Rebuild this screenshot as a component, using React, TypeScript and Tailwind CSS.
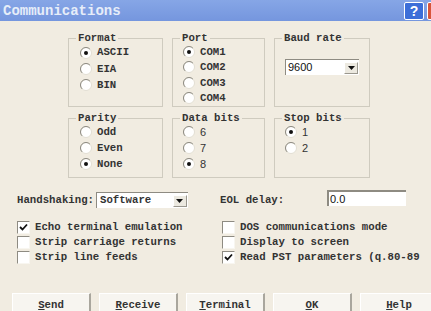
import React from "react";

const mono = { fontFamily: '"Liberation Mono", "DejaVu Sans Mono", monospace' };
const sans = { fontFamily: '"Liberation Sans", Arial, sans-serif' };

function Radio({ checked }: { checked?: boolean }) {
  return (
    <svg width="12" height="12" viewBox="0 0 12 12" className="shrink-0">
      <circle cx="6" cy="6" r="5.5" fill="#ffffff" stroke="#e2ded3" strokeWidth="1" />
      <path d="M2.1 9.9 A5.5 5.5 0 0 1 9.9 2.1" fill="none" stroke="#8d8a81" strokeWidth="1" />
      {checked && <circle cx="6" cy="6" r="2" fill="#111" />}
    </svg>
  );
}

function Check({ checked }: { checked?: boolean }) {
  return (
    <span className="w-[13px] h-[13px] shrink-0 bg-white border-t border-l border-t-[#8e8b82] border-l-[#8e8b82] border-r border-b border-r-[#f8f6f0] border-b-[#f8f6f0] flex items-center justify-center">
      {checked && (
        <svg width="9" height="9" viewBox="0 0 9 9">
          <path d="M1 4 L3.5 6.5 L8 1.5" fill="none" stroke="#111" strokeWidth="1.8" />
        </svg>
      )}
    </span>
  );
}

function Arrow() {
  return (
    <span className="w-[14px] h-[12px] bg-[#ece9e0] border-r border-b border-r-[#9a978e] border-b-[#9a978e] border-l border-t border-l-white border-t-white flex items-center justify-center">
      <svg width="7" height="4" viewBox="0 0 7 4">
        <path d="M0 0 H7 L3.5 4 Z" fill="#111" />
      </svg>
    </span>
  );
}

function Group({ title, children, className }: { title: string; children?: React.ReactNode; className?: string }) {
  return (
    <div className={"relative border border-[#cfcbbf] " + (className || "")}>
      <span
        className="absolute left-[7px] top-[-8px] px-[2px] bg-[#f1ece1] text-[10.7px] leading-[14px] font-bold text-[#333]"
        style={mono}
      >
        {title}
      </span>
      {children}
    </div>
  );
}

function RadioRow({ label, checked, h = "h-[16px]", sansText }: { label: string; checked?: boolean; h?: string; sansText?: boolean }) {
  return (
    <div className={"flex items-center gap-[5px] " + h}>
      <Radio checked={checked} />
      <span
        className={"text-[#333] " + (sansText ? "text-[11px]" : "text-[10.7px] font-bold")}
        style={sansText ? sans : mono}
      >
        {label}
      </span>
    </div>
  );
}

function CheckRow({ label, checked }: { label: string; checked?: boolean }) {
  return (
    <div className="flex items-center gap-[5px] h-[15px]">
      <Check checked={checked} />
      <span className="text-[10.7px] font-bold text-[#333] whitespace-nowrap" style={mono}>
        {label}
      </span>
    </div>
  );
}

function Btn({ label }: { label: string }) {
  return (
    <div className="w-[79px] h-[22px] shrink-0 bg-[#f7f5f0] border-t border-l border-t-white border-l-white border-r-2 border-r-[#a9a69d] flex items-center justify-center">
      <span className="text-[10.7px] font-bold text-[#333] mt-[2px]" style={mono}>
        <span className="underline">{label[0]}</span>
        {label.slice(1)}
      </span>
    </div>
  );
}

export default function App() {
  return (
    <div className="w-[431px] h-[311px] overflow-hidden bg-[#f1ece1] flex flex-col">
      {/* Title bar */}
      <div className="h-[21px] shrink-0 bg-gradient-to-b from-[#86a6e6] to-[#7596de] flex items-center">
        <span className="ml-[3px] text-[14px] font-bold text-[#e6edf9] leading-none" style={mono}>
          Communications
        </span>
        <div className="ml-auto flex items-center gap-[3px] mr-[-6px]">
          <span
            className="w-[20px] h-[18px] rounded-[2px] border border-white bg-[#3c6ed8] flex items-center justify-center text-white text-[14px] font-bold leading-none"
            style={sans}
          >
            ?
          </span>
          <span className="w-[10px] h-[18px] rounded-l-[2px] border border-white bg-[#d8553a]" />
        </div>
      </div>

      {/* Group boxes */}
      <div className="ml-[68px] mt-[17px] grid grid-cols-[95px_93px_96px] grid-rows-[69px_60px] gap-x-[9px] gap-y-[11px]">
        <Group title="Format">
          <div className="pt-[5px] pl-[11px] flex flex-col">
            <RadioRow label="ASCII" checked h="h-[17px]" />
            <RadioRow label="EIA" h="h-[16px]" />
            <RadioRow label="BIN" h="h-[16px]" />
          </div>
        </Group>
        <Group title="Port">
          <div className="pt-[5px] pl-[10px] flex flex-col">
            <RadioRow label="COM1" checked h="h-[15.5px]" />
            <RadioRow label="COM2" h="h-[15.5px]" />
            <RadioRow label="COM3" h="h-[15.5px]" />
            <RadioRow label="COM4" h="h-[15.5px]" />
          </div>
        </Group>
        <Group title="Baud rate">
          <div className="pt-[20px] pl-[10px]">
            <div className="w-[74px] h-[16px] bg-white border-t border-l border-t-[#8e8b82] border-l-[#8e8b82] flex items-center justify-between pl-[2px] pr-[1px]">
              <span className="text-[11px] text-[#111]" style={sans}>9600</span>
              <Arrow />
            </div>
          </div>
        </Group>
        <Group title="Parity">
          <div className="pt-[5px] pl-[11px] flex flex-col">
            <RadioRow label="Odd" />
            <RadioRow label="Even" />
            <RadioRow label="None" checked />
          </div>
        </Group>
        <Group title="Data bits">
          <div className="pt-[5px] pl-[10px] flex flex-col">
            <RadioRow label="6" sansText />
            <RadioRow label="7" sansText />
            <RadioRow label="8" checked sansText />
          </div>
        </Group>
        <Group title="Stop bits">
          <div className="pt-[5px] pl-[10px] flex flex-col">
            <RadioRow label="1" checked sansText />
            <RadioRow label="2" sansText />
          </div>
        </Group>
      </div>

      {/* Handshaking / EOL */}
      <div className="mt-[14px] pl-[17px] flex items-center h-[16px]">
        <div className="w-[203px] flex items-center">
          <span className="text-[10.7px] font-bold text-[#333] whitespace-nowrap" style={mono}>
            Handshaking:
          </span>
          <div className="ml-[2px] w-[92px] h-[16px] bg-white border-t border-l border-t-[#8e8b82] border-l-[#8e8b82] flex items-center justify-between pl-[3px] pr-[1px]">
            <span className="text-[10.7px] font-bold text-[#333]" style={mono}>Software</span>
            <Arrow />
          </div>
        </div>
        <span className="w-[107px] text-[10.7px] font-bold text-[#333] whitespace-nowrap" style={mono}>
          EOL delay:
        </span>
        <div className="w-[79px] h-[16px] mt-[-4px] bg-white border-t-2 border-l-2 border-t-[#8e8b82] border-l-[#8e8b82] flex items-center pl-[1px]">
          <span className="text-[11px] text-[#111]" style={sans}>0.0</span>
        </div>
      </div>

      {/* Checkboxes */}
      <div className="mt-[12px] pl-[17px] grid grid-cols-[205px_1fr]">
        <div className="flex flex-col">
          <CheckRow label="Echo terminal emulation" checked />
          <CheckRow label="Strip carriage returns" />
          <CheckRow label="Strip line feeds" />
        </div>
        <div className="flex flex-col">
          <CheckRow label="DOS communications mode" />
          <CheckRow label="Display to screen" />
          <CheckRow label="Read PST parameters (q.80-89" checked />
        </div>
      </div>

      {/* Buttons */}
      <div className="mt-[28px] pl-[12px] flex gap-[8px]">
        <Btn label="Send" />
        <Btn label="Receive" />
        <Btn label="Terminal" />
        <Btn label="OK" />
        <Btn label="Help" />
      </div>
    </div>
  );
}
